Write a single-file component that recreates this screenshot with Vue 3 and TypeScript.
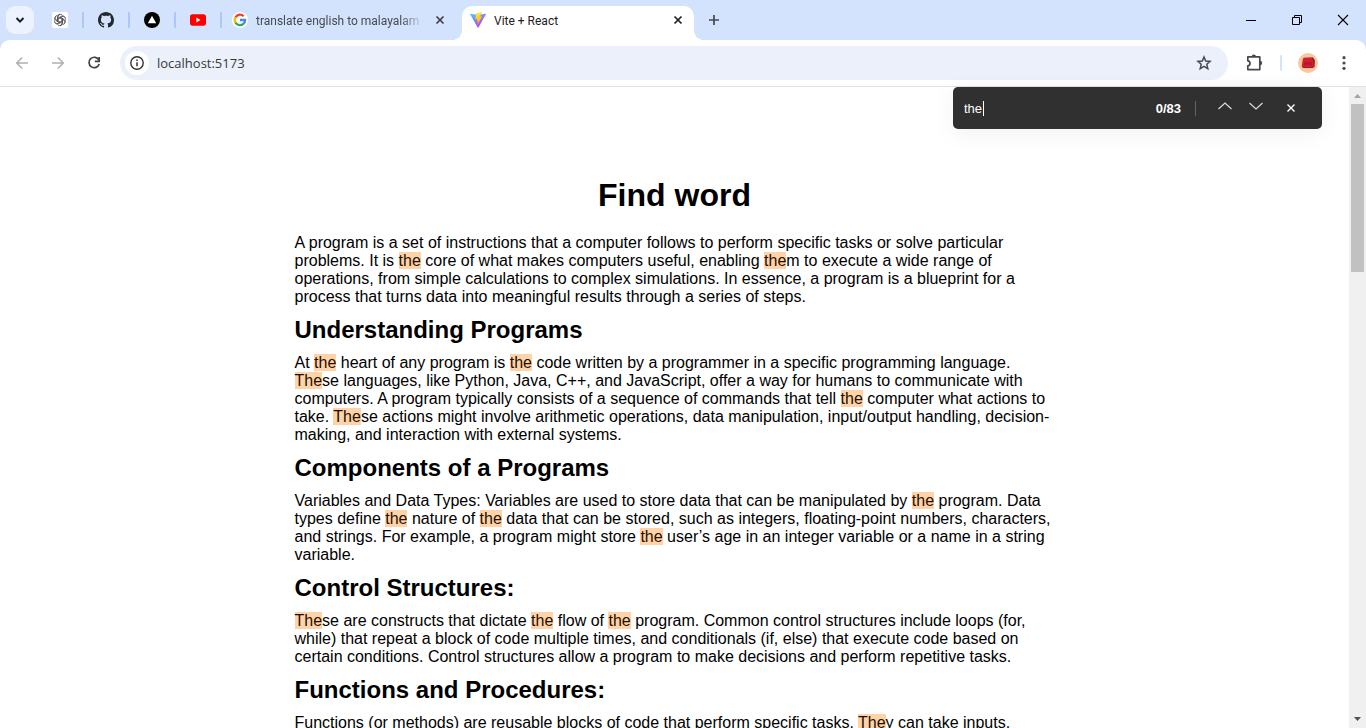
<script setup lang="ts">
import { computed, ref } from 'vue'

interface Section {
  heading: string
  body: string
}

interface Segment {
  text: string
  hit: boolean
}

const query = ref('the')
const address = ref('localhost:5173')

const intro =
  'A program is a set of instructions that a computer follows to perform specific tasks or solve particular problems. It is the core of what makes computers useful, enabling them to execute a wide range of operations, from simple calculations to complex simulations. In essence, a program is a blueprint for a process that turns data into meaningful results through a series of steps.'

const sections: Section[] = [
  {
    heading: 'Understanding Programs',
    body: 'At the heart of any program is the code written by a programmer in a specific programming language. These languages, like Python, Java, C++, and JavaScript, offer a way for humans to communicate with computers. A program typically consists of a sequence of commands that tell the computer what actions to take. These actions might involve arithmetic operations, data manipulation, input/output handling, decision-making, and interaction with external systems.',
  },
  {
    heading: 'Components of a Programs',
    body: 'Variables and Data Types: Variables are used to store data that can be manipulated by the program. Data types define the nature of the data that can be stored, such as integers, floating-point numbers, characters, and strings. For example, a program might store the user’s age in an integer variable or a name in a string variable.',
  },
  {
    heading: 'Control Structures:',
    body: 'These are constructs that dictate the flow of the program. Common control structures include loops (for, while) that repeat a block of code multiple times, and conditionals (if, else) that execute code based on certain conditions. Control structures allow a program to make decisions and perform repetitive tasks.',
  },
  {
    heading: 'Functions and Procedures:',
    body: 'Functions (or methods) are reusable blocks of code that perform specific tasks. They can take inputs,',
  },
]

function split(text: string): Segment[] {
  const term = query.value.replace(/[.*+?^${}()|[\]\\]/g, '\\$&')
  if (!term) return [{ text, hit: false }]
  return text
    .split(new RegExp(`(${term})`, 'gi'))
    .map((part, i) => ({ text: part, hit: i % 2 === 1 }))
    .filter((s) => s.text !== '')
}

const introSegments = computed(() => split(intro))
const sectionSegments = computed(() =>
  sections.map((s) => ({ heading: s.heading, segments: split(s.body) })),
)
</script>

<template>
  <div class="window">
    <header class="tabstrip">
      <button class="tab-search" aria-label="Search tabs">
        <svg width="10" height="10" viewBox="0 0 10 10"><path d="M1.500 3l3.500 3.600L8.500 3" fill="none" stroke="#1c1d20" stroke-width="2" /></svg>
      </button>
      <nav class="pinned" aria-label="Pinned tabs">
        <button class="favicon" aria-label="ChatGPT">
          <svg width="16" height="16" viewBox="0 0 16 16">
            <rect width="16" height="16" rx="2" fill="#fff" />
            <g fill="none" stroke="#444" stroke-width="0.800">
              <path v-for="n in 6" :key="n" :transform="`rotate(${n * 60} 8 8)`" d="M6.200 9V4.600a2.300 2.300 0 0 1 4.200-1.300M6.200 6.100l3.300-1.900a2.300 2.300 0 0 1 3.200 1" />
            </g>
          </svg>
        </button>
        <span class="divider"></span>
        <button class="favicon" aria-label="GitHub">
          <svg width="16" height="16" viewBox="0 0 16 16"><path fill="#24292f" d="M8 0C3.580 0 0 3.580 0 8c0 3.540 2.290 6.530 5.470 7.590.4.070.55-.17.55-.38 0-.19-.01-.82-.01-1.490-2.010.37-2.530-.49-2.690-.94-.09-.23-.48-.94-.82-1.130-.28-.15-.68-.52-.01-.53.63-.01 1.080.58 1.230.82.72 1.210 1.870.87 2.330.66.070-.52.28-.87.51-1.070-1.780-.2-3.640-.89-3.640-3.950 0-.87.31-1.590.82-2.150-.08-.2-.36-1.020.08-2.120 0 0 .67-.21 2.200.82.64-.18 1.320-.27 2-.27s1.360.09 2 .27c1.530-1.040 2.200-.82 2.200-.82.44 1.100.16 1.920.08 2.120.51.56.82 1.270.82 2.150 0 3.070-1.870 3.750-3.650 3.950.29.25.54.73.54 1.480 0 1.070-.01 1.930-.01 2.200 0 .21.15.46.55.38A8.010 8.010 0 0 0 16 8c0-4.420-3.580-8-8-8z" /></svg>
        </button>
        <span class="divider"></span>
        <button class="favicon" aria-label="Vercel">
          <svg width="16" height="16" viewBox="0 0 16 16"><circle cx="8" cy="8" r="8" /><path d="M8 3.700l4.200 7.500H3.800z" fill="#fff" /></svg>
        </button>
        <span class="divider"></span>
        <button class="favicon" aria-label="YouTube">
          <svg width="16" height="16" viewBox="0 0 16 16"><rect y="2.300" width="16" height="11.400" rx="2.600" fill="#f00" /><path d="M6.400 5.600v4.800L10.500 8z" fill="#fff" /></svg>
        </button>
        <span class="divider"></span>
      </nav>

      <div class="tab background-tab">
        <svg width="16" height="16" viewBox="0 0 16 16">
          <circle cx="8" cy="8" r="8" fill="#fff" />
          <g fill="none" stroke-width="2.300">
            <path d="M3.480 5.300A5.200 5.200 0 0 1 11.700 4.300" stroke="#ea4335" />
            <path d="M3.500 10.600a5.200 5.200 0 0 1 0-5.300" stroke="#fbbc05" />
            <path d="M11.400 11.900A5.200 5.200 0 0 1 3.400 10.500" stroke="#34a853" />
            <path d="M8 8h5.100a5.200 5.200 0 0 1-1.800 4" stroke="#4285f4" />
          </g>
        </svg>
        <button class="tab-title fading">translate english to malayalam -</button>
        <button class="tab-close" aria-label="Close tab">
          <svg width="16" height="16" viewBox="0 0 16 16"><path d="M4.500 4.500l7 7m0-7l-7 7" stroke="#3c3f44" stroke-width="1.700" /></svg>
        </button>
      </div>

      <div class="tab active-tab">
        <svg width="16" height="16" viewBox="0 0 16 16">
          <defs>
            <linearGradient id="shield" x1="0" y1="0" x2="0.600" y2="1"><stop offset="0" stop-color="#41d1ff" /><stop offset="1" stop-color="#bd34fe" /></linearGradient>
            <linearGradient id="bolt" x1="0.400" y1="0" x2="0.600" y2="1"><stop offset="0" stop-color="#ffea83" /><stop offset="0.200" stop-color="#ffdd35" /><stop offset="1" stop-color="#ffa800" /></linearGradient>
          </defs>
          <path d="M15.900 2.300L8.400 15.600a.4.400 0 0 1-.7 0L.1 2.300a.4.400 0 0 1 .42-.6l7.500 1.300 7.400-1.300a.4.400 0 0 1 .48.6z" fill="url(#shield)" />
          <path d="M11.600.1L6 1.200a.25.250 0 0 0-.2.200L5.500 7.100a.2.200 0 0 0 .26.210l1.540-.35-.45 2.300c-.03.15.1.280.25.240l.95-.3-.73 3.500c-.05.220.25.340.37.150L11.900 4.500a.2.200 0 0 0-.23-.3L10 4.500l1.900-4.100a.2.200 0 0 0-.3-.3z" fill="url(#bolt)" />
        </svg>
        <button class="tab-title">Vite + React</button>
        <button class="tab-close" aria-label="Close tab">
          <svg width="16" height="16" viewBox="0 0 16 16"><path d="M4.500 4.500l7 7m0-7l-7 7" stroke="#1f2023" stroke-width="1.700" /></svg>
        </button>
      </div>

      <button class="new-tab" aria-label="New tab">
        <svg width="12" height="12" viewBox="0 0 12 12"><path d="M6 1v10M1 6h10" stroke="#46494e" stroke-width="1.700" /></svg>
      </button>

      <div class="window-controls">
        <button aria-label="Minimize"><svg width="12" height="12" viewBox="0 0 12 12"><path d="M1 6.500h10" stroke="#000" /></svg></button>
        <button aria-label="Restore"><svg width="12" height="12" viewBox="0 0 12 12"><path d="M1.500 3.500h7v7h-7zM3.500 3.500v-2h7v7h-2" fill="none" stroke="#000" /></svg></button>
        <button aria-label="Close"><svg width="12" height="12" viewBox="0 0 12 12"><path d="M1 1l10 10M11 1L1 11" stroke="#000" stroke-width="1.100" /></svg></button>
      </div>
    </header>

    <div class="toolbar">
      <button class="tool" aria-label="Back"><svg width="16" height="16" viewBox="0 0 16 16"><path d="M14 8H3M8.200 2.500L2.700 8l5.500 5.500" fill="none" stroke="#aeb0b3" stroke-width="1.500" /></svg></button>
      <button class="tool" aria-label="Forward"><svg width="16" height="16" viewBox="0 0 16 16"><path d="M2 8h11M7.800 2.500L13.300 8l-5.500 5.500" fill="none" stroke="#aeb0b3" stroke-width="1.500" /></svg></button>
      <button class="tool" aria-label="Reload"><svg width="16" height="16" viewBox="0 0 16 16"><path d="M12.900 5.200A5.200 5.200 0 1 0 13.200 9" fill="none" stroke="#3f4246" stroke-width="1.700" /><path d="M13.200 1.900v4.500H8.800" fill="none" stroke="#3f4246" stroke-width="1.700" /></svg></button>
      <div class="omnibox">
        <button class="site-info" aria-label="View site information">
          <svg width="16" height="16" viewBox="0 0 16 16"><circle cx="8" cy="8" r="6.200" fill="none" stroke="#303236" stroke-width="1.400" /><path d="M8 7.200v4M8 4.500v1.500" stroke="#303236" stroke-width="1.500" /></svg>
        </button>
        <input v-model="address" class="address" type="text" aria-label="Address" spellcheck="false" />
        <button class="bookmark" aria-label="Bookmark this tab">
          <svg width="16" height="16" viewBox="0 0 16 16"><path d="M8 2l1.700 4 4.400.4-3.300 2.900 1 4.300L8 11.300l-3.800 2.300 1-4.300-3.300-2.900 4.400-.4z" fill="none" stroke="#46494e" stroke-width="1.500" /></svg>
        </button>
      </div>
      <div class="actions">
        <button class="tool" aria-label="Extensions">
          <svg width="20" height="20" viewBox="0 0 20 20"><path d="M3.800 3.800h12v12.800h-12v-3.800c1.500-.2 2.200-1.200 2.200-2.400S5.300 8 3.800 7.800z" fill="none" stroke="#46494e" stroke-width="1.700" stroke-linejoin="round" /><path d="M7.600 3.800a2.200 2.200 0 0 1 4.400 0zM16 7.800a2.200 2.200 0 0 1 0 4.400z" fill="#46494e" /></svg>
        </button>
        <span class="divider"></span>
        <button class="tool" aria-label="Profile">
          <svg width="20" height="20" viewBox="0 0 20 20"><circle cx="10" cy="10" r="10" fill="#fdc69b" /><path d="M6 4.800l9-.3 1.800 3-.3 6.400-2 1.200-9-.2L4.500 14 5 6z" fill="#3f2442" /><path d="M6.200 5l7.800-.2 1.600 3.200.4 5.400-2 1.100H4.200l-.4-1.300L5 6z" fill="#d91d2c" /><path d="M6.500 10l1.500-1 1.200 2.200-1.200 1.300-1.500-1zM11.300 10l1.500-1 1.200 2.200-1.200 1.300-1.500-1zM9.200 10.500l2 .2" fill="none" stroke="#8d1828" stroke-width="0.900" /></svg>
        </button>
        <button class="tool menu" aria-label="Menu">
          <svg width="16" height="16" viewBox="0 0 16 16" fill="#46494e"><circle cx="8" cy="2.700" r="1.600" /><circle cx="8" cy="8" r="1.600" /><circle cx="8" cy="13.300" r="1.600" /></svg>
        </button>
      </div>
    </div>

    <div class="viewport">
      <main class="page">
        <h1>Find word</h1>
        <article>
          <p><template v-for="(s, i) in introSegments" :key="i"><mark v-if="s.hit">{{ s.text }}</mark><template v-else>{{ s.text }}</template></template></p>
          <section v-for="sec in sectionSegments" :key="sec.heading">
            <h2>{{ sec.heading }}</h2>
            <p><template v-for="(s, i) in sec.segments" :key="i"><mark v-if="s.hit">{{ s.text }}</mark><template v-else>{{ s.text }}</template></template></p>
          </section>
        </article>
      </main>

      <div class="scrollbar" aria-hidden="true">
        <svg width="17" height="17" viewBox="0 0 17 17"><path d="M5 11h7L8.500 7z" fill="#a3a3a3" /></svg>
        <div class="track"><div class="thumb"></div></div>
        <svg width="17" height="17" viewBox="0 0 17 17"><path d="M5 6h7l-3.500 4z" fill="#505050" /></svg>
      </div>

      <form class="find-bar" role="search" @submit.prevent>
        <div class="find-field">
          <input v-model="query" type="text" aria-label="Find in page" spellcheck="false" />
          <span class="caret"></span>
        </div>
        <output class="count">0/83</output>
        <span class="find-divider"></span>
        <button type="button" aria-label="Previous match"><svg width="14" height="8" viewBox="0 0 14 8"><path d="M.5 7L7 1l6.500 6" fill="none" stroke="#ddd" stroke-width="1.200" /></svg></button>
        <button type="button" aria-label="Next match"><svg width="14" height="8" viewBox="0 0 14 8"><path d="M.5 1L7 7l6.500-6" fill="none" stroke="#ddd" stroke-width="1.200" /></svg></button>
        <button type="button" class="find-close" aria-label="Close find bar"><svg width="8" height="8" viewBox="0 0 8 8"><path d="M.5.5l7 7m0-7l-7 7" stroke="#fff" stroke-width="1.400" /></svg></button>
      </form>
    </div>
  </div>
</template>

<style>
body {
  background: #d3e3fd;
}
</style>

<style scoped>
.window {
  display: flex;
  flex-direction: column;
  height: 100vh;
  overflow: hidden;
  background: #d3e3fd;
  font-family: "Open Sans", "Noto Sans", sans-serif;
}

button {
  display: flex;
  align-items: center;
  justify-content: center;
  padding: 0;
  border: 0;
  background: none;
  font: inherit;
  color: inherit;
}

input {
  padding: 0;
  border: 0;
  outline: 0;
  background: none;
  font: inherit;
  color: inherit;
}

svg {
  display: block;
  flex: none;
}

.tabstrip {
  display: flex;
  align-items: center;
  height: 40px;
  flex: none;
  padding-left: 6px;
  font-family: Roboto, "Noto Sans", sans-serif;
  font-size: 12px;
  color: #474a4f;
}

.tab-search {
  width: 28px;
  height: 28px;
  border-radius: 9px;
  background: #edf3fe;
}

.pinned {
  display: flex;
  align-items: center;
  gap: 14px;
  margin-left: 18px;
}

.divider {
  width: 2px;
  height: 16px;
  border-radius: 1px;
  background: #a8c7fa;
}

.tab {
  display: flex;
  align-items: center;
  gap: 8px;
}

.tab-title {
  flex: 1;
  min-width: 0;
  justify-content: flex-start;
  overflow: hidden;
  white-space: nowrap;
  padding-top: 2px;
  line-height: 18px;
}

.fading {
  mask-image: linear-gradient(to right, #000 86%, transparent);
}

.background-tab {
  width: 216px;
  margin: 0 14px 0 10px;
}

.active-tab {
  position: relative;
  align-self: flex-end;
  width: 232px;
  height: 34px;
  padding: 0 8px 6px;
  box-sizing: border-box;
  border-radius: 10px 10px 0 0;
  background: #fff;
  color: #1f2023;
}

.active-tab::before,
.active-tab::after {
  content: "";
  position: absolute;
  bottom: 0;
  width: 10px;
  height: 10px;
}

.active-tab::before {
  right: 100%;
  background: radial-gradient(circle at 0 0, transparent 10px, #fff 10px);
}

.active-tab::after {
  left: 100%;
  background: radial-gradient(circle at 100% 0, transparent 10px, #fff 10px);
}

.new-tab {
  width: 28px;
  height: 28px;
  margin-left: 6px;
}

.window-controls {
  display: flex;
  align-self: stretch;
  margin-left: auto;
}

.window-controls button {
  width: 46px;
}

.toolbar {
  display: flex;
  align-items: center;
  height: 46px;
  flex: none;
  padding: 0 14px;
  border-bottom: 1px solid #dfe1e3;
  border-radius: 10px 10px 0 0;
  background: #fff;
  gap: 20px;
}

.tool {
  min-width: 16px;
}

.omnibox {
  display: flex;
  align-items: center;
  flex: 1;
  height: 34px;
  margin: 0 -4px 0 -2px;
  padding: 0 16px 0 5px;
  box-sizing: border-box;
  border-radius: 17px;
  background: #ecf0fa;
}

.site-info {
  width: 24px;
  height: 24px;
  border-radius: 50%;
  background: #fff;
}

.address {
  flex: 1;
  min-width: 0;
  margin-left: 8px;
  font-size: 13px;
  line-height: 20px;
  color: #36393d;
}

.actions {
  display: flex;
  align-items: center;
  gap: 16px;
}

.actions .divider {
  background: #d3e3fd;
}

.menu {
  margin-left: 2px;
}

.viewport {
  position: relative;
  display: flex;
  flex: 1;
  min-height: 0;
  background: #fff;
  font-family: "Liberation Sans", Arial, sans-serif;
}

.page {
  flex: 1;
  min-width: 0;
  padding-top: 90px;
  overflow: hidden;
  font-size: 16px;
  line-height: 18px;
  color: #000;
}

h1 {
  margin: 0 0 21px;
  font-size: 32px;
  line-height: 36px;
  text-align: center;
}

article {
  max-width: 760px;
  margin: 0 auto;
}

p {
  margin: 0;
}

h2 {
  margin: 10px 0;
  font-size: 24px;
  line-height: 28px;
}

mark {
  background: #ffd3a8;
  color: #1f0d00;
}

.scrollbar {
  display: flex;
  flex-direction: column;
  flex: none;
  width: 17px;
  background: #f0f0f0;
}

.track {
  flex: 1;
}

.thumb {
  height: 168px;
  margin: 0 2px;
  background: #c1c1c1;
}

.find-bar {
  position: absolute;
  top: 0;
  right: 44px;
  display: flex;
  align-items: center;
  width: 369px;
  height: 42px;
  padding: 0 24px 0 11px;
  box-sizing: border-box;
  border-radius: 5px;
  background: #303030;
  box-shadow: 0 4px 24px rgba(0, 0, 0, 0.06);
  font-size: 13px;
  line-height: 16px;
  color: #fff;
}

.find-field {
  position: relative;
  flex: 1;
  min-width: 0;
}

.find-field input {
  display: block;
  width: 100%;
  padding-top: 1px;
}

.caret {
  position: absolute;
  top: 1px;
  left: 19px;
  width: 1px;
  height: 15px;
  background: #fff;
}

.count {
  padding-top: 1px;
  font-weight: 700;
}

.find-divider {
  width: 1px;
  height: 15px;
  margin: 0 13px 0 14px;
  background: #646464;
}

.find-bar button {
  width: 31px;
  height: 28px;
}

.find-bar svg {
  margin-bottom: 4px;
}

.find-bar .find-close {
  width: 14px;
  margin-left: 13px;
}

.find-bar .find-close svg {
  margin: 0;
}
</style>
